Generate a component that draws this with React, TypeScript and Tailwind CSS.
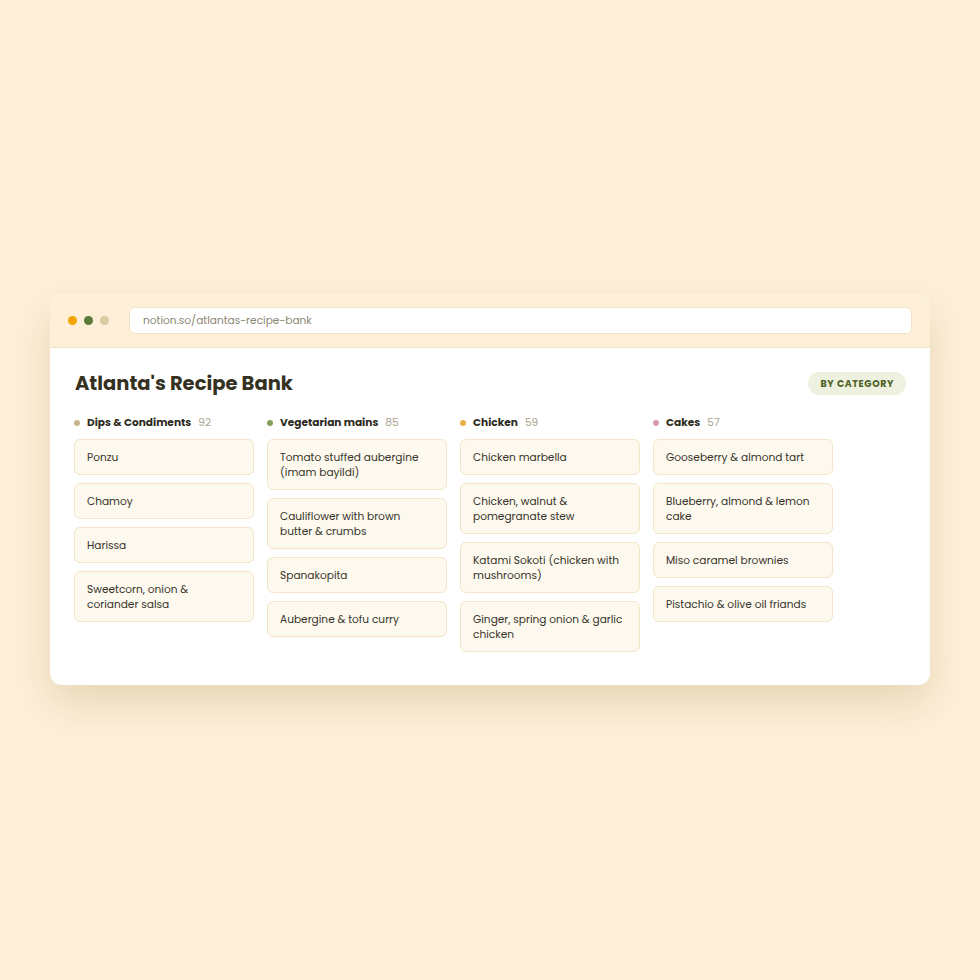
import React from 'react';

interface Column {
  name: string;
  count: number;
  dot: string;
  items: string[];
}

const columns: Column[] = [
  {
    name: 'Dips & Condiments',
    count: 92,
    dot: 'bg-[#c8b48c]',
    items: ['Ponzu', 'Chamoy', 'Harissa', 'Sweetcorn, onion & coriander salsa'],
  },
  {
    name: 'Vegetarian mains',
    count: 85,
    dot: 'bg-[#86a05a]',
    items: [
      'Tomato stuffed aubergine (imam bayildi)',
      'Cauliflower with brown butter & crumbs',
      'Spanakopita',
      'Aubergine & tofu curry',
    ],
  },
  {
    name: 'Chicken',
    count: 59,
    dot: 'bg-[#e8b148]',
    items: [
      'Chicken marbella',
      'Chicken, walnut & pomegranate stew',
      'Katami Sokoti (chicken with mushrooms)',
      'Ginger, spring onion & garlic chicken',
    ],
  },
  {
    name: 'Cakes',
    count: 57,
    dot: 'bg-[#d996b2]',
    items: [
      'Gooseberry & almond tart',
      'Blueberry, almond & lemon cake',
      'Miso caramel brownies',
      'Pistachio & olive oil friands',
    ],
  },
];

export default function App() {
  return (
    <div
      className="w-[980px] h-[980px] bg-[#feefd9] flex items-start justify-center pt-[294px]"
      style={{ fontFamily: '"Poppins", "Open Sans", "Noto Sans", sans-serif' }}
    >
      <div className="w-[880px] bg-white rounded-[12px] overflow-hidden shadow-[0_18px_40px_rgba(170,150,90,0.28)]">
        {/* Browser bar */}
        <div className="h-[54px] bg-[#fdefd8] border-b border-[#f1e2c2] flex items-center pl-[18px] pr-[18px]">
          <div className="flex items-center gap-[7px]">
            <span className="w-[9px] h-[9px] rounded-full bg-[#f5a300]" />
            <span className="w-[9px] h-[9px] rounded-full bg-[#5a7a3a]" />
            <span className="w-[9px] h-[9px] rounded-full bg-[#d8cba4]" />
          </div>
          <div className="ml-[20px] flex-1 h-[27px] bg-white rounded-[6px] border border-[#f0e2c4] flex items-center px-[13px] text-[10.6px] text-[#8d8673]">
            notion.so/atlantas-recipe-bank
          </div>
        </div>

        {/* Content */}
        <div className="px-[24px] pt-[21px] pb-[33px]">
          <div className="flex items-center justify-between pl-px">
            <h1 className="text-[19.5px] font-bold text-[#35311f] tracking-[0px]">Atlanta's Recipe Bank</h1>
            <span className="h-[23px] px-[12px] rounded-full bg-[#eef0e0] text-[#4f6326] text-[9.5px] font-bold tracking-[0.6px] flex items-center">
              BY CATEGORY
            </span>
          </div>

          <div className="mt-[17px] flex gap-[13px] items-start">
            {columns.map((col) => (
              <div key={col.name} className="w-[180px] flex flex-col">
                <div className="flex items-center h-[16px] text-[10.6px]">
                  <span className={`w-[6px] h-[6px] rounded-full ${col.dot}`} />
                  <span className="ml-[7px] font-bold text-[#2d2a20]">{col.name}</span>
                  <span className="ml-[7px] text-[#aaa38c]">{col.count}</span>
                </div>
                <div className="mt-[8px] flex flex-col gap-[8px]">
                  {col.items.map((item) => (
                    <div
                      key={item}
                      className="bg-[#fdf9ee] border border-[#f3e5c7] rounded-[6px] pl-[12px] pr-[11px] py-[9.5px] text-[10.6px] leading-[15px] text-[#37332a]"
                    >
                      {item}
                    </div>
                  ))}
                </div>
              </div>
            ))}
          </div>
        </div>
      </div>
    </div>
  );
}
